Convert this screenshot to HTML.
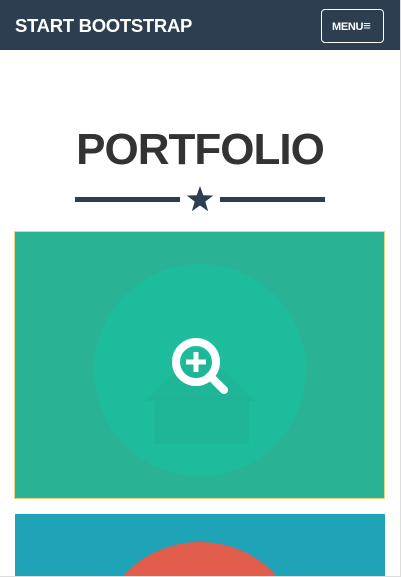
<!DOCTYPE html>
<html><head><style>
*{margin:0;padding:0;box-sizing:border-box}
html,body{width:401px;height:577px;overflow:hidden}
body{background:#fff;font-family:"Liberation Sans",sans-serif;position:relative}
.nav{position:absolute;left:0;top:0;width:400px;height:50px;background:#2c3e50}
.brand{position:absolute;left:15px;top:15px;color:#fff;font-weight:bold;font-size:18.5px;letter-spacing:-0.3px}
.btn{position:absolute;left:321px;top:9px;width:63px;height:34px;border:1px solid #fff;border-radius:4px;color:#fff;font-weight:bold;font-size:11px;line-height:32px;padding-left:10px;letter-spacing:-0.3px}
.rb{position:absolute;right:0;top:0;width:1px;height:577px;background:#ddd}
.bb{position:absolute;left:0;bottom:0;width:401px;height:1px;background:#ddd}
h2{position:absolute;left:0;width:400px;top:125px;text-align:center;font-size:44px;font-weight:bold;color:#333;letter-spacing:-1px}
.line{position:absolute;top:197px;height:5px;background:#2c3e50}
.p1{position:absolute;left:14px;top:231px;width:371px;height:268px;background:#29b294;border:1px solid #f0d080;overflow:hidden}
.p2{position:absolute;left:15px;top:514px;width:370px;height:63px;background:#1fa3b6;overflow:hidden}
</style></head><body>
<div class="nav"><div class="brand">START BOOTSTRAP</div><div class="btn">MENU<span style="font-size:13px">&#8801;</span></div></div>
<h2>PORTFOLIO</h2>
<div class="line" style="left:75px;width:105px"></div>
<div class="line" style="left:220px;width:105px"></div>
<svg style="position:absolute;left:186px;top:186px" width="28" height="26" viewBox="0 0 28 26"><polygon points="14,0 17.3,9.3 27.3,9.5 19.3,15.6 22.2,25.3 14,19.5 5.8,25.3 8.7,15.6 0.7,9.5 10.7,9.3" fill="#2c3e50"/></svg>
<div class="p1">
<svg width="371" height="268" style="position:absolute;left:-1px;top:-1px">
<circle cx="186" cy="139" r="106" fill="#1dbc9c"/>
<path d="M130 170 L186 118 L242 170 Z" fill="#22b396" opacity=".6"/>
<rect x="140" y="165" width="95" height="48" fill="#20b395" opacity=".6"/>
<circle cx="182" cy="131" r="20" fill="none" stroke="#fff" stroke-width="8"/>
<line x1="196" y1="145" x2="210" y2="159" stroke="#fff" stroke-width="8" stroke-linecap="round"/>
<line x1="172" y1="131" x2="192" y2="131" stroke="#fff" stroke-width="5"/>
<line x1="182" y1="121" x2="182" y2="141" stroke="#fff" stroke-width="5"/>
</svg></div>
<div class="p2"><svg width="370" height="63"><circle cx="185" cy="132" r="104" fill="#e05c4b"/></svg></div>
<div class="rb"></div><div class="bb"></div>
</body></html>
